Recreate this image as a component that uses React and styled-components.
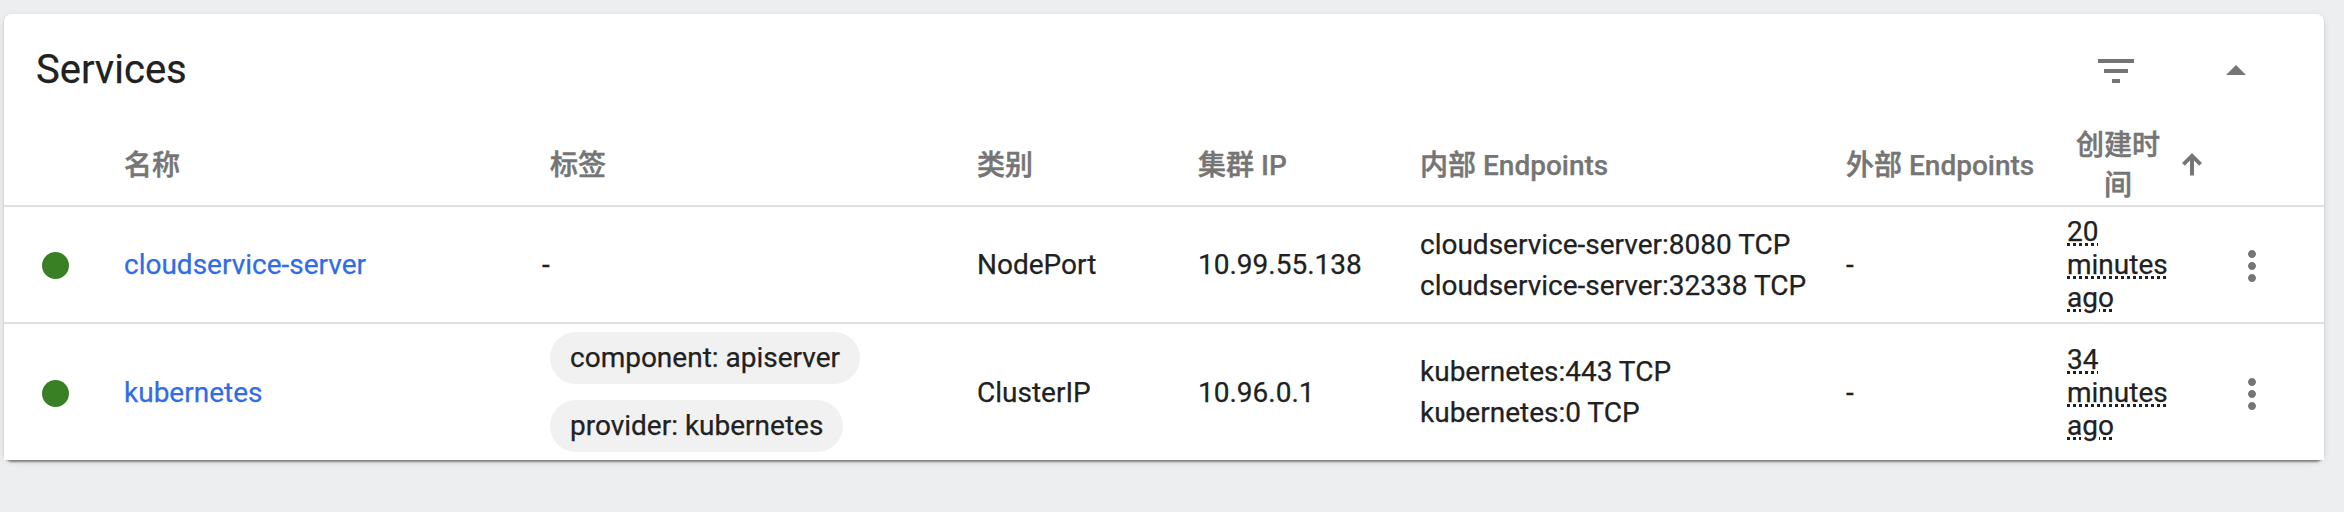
import React from 'react';
import styled, { createGlobalStyle } from 'styled-components';

const GlobalStyle = createGlobalStyle`
  * { box-sizing: border-box; }
  body {
    margin: 0;
    background: #edeef0;
    color: #212121;
    font: 400 28px/33px Roboto, 'Noto Sans CJK SC', sans-serif;
    -webkit-text-stroke: 0.25px currentColor;
  }
`;

const Page = styled.main`
  height: 512px;
  padding: 14px 20px 0 4px;
  overflow: hidden;
`;

const Card = styled.section`
  height: 446px;
  border-radius: 8px;
  background: #fff;
  box-shadow: 0 4px 2px -2px rgba(0, 0, 0, 0.3), 0 2px 2px rgba(0, 0, 0, 0.14),
    0 2px 6px rgba(0, 0, 0, 0.12);
`;

const CardHeader = styled.header`
  display: flex;
  align-items: center;
  height: 111px;
  padding: 3px 64px 0 32px;
`;

const Title = styled.h2`
  flex: 1;
  margin: 0;
  padding-bottom: 2px;
  font-size: 40px;
  line-height: 48px;
  font-weight: 400;
`;

const IconButton = styled.button`
  display: grid;
  place-items: center;
  width: 48px;
  height: 48px;
  margin: ${(p) => p.$drop || 0}px 0 0 ${(p) => p.$gap || 0}px;
  padding: 0;
  border: 0;
  background: none;
  color: #757575;

  svg { display: block; fill: currentColor; }
`;

const Row = styled.div`
  display: grid;
  grid-template-columns: 120px 426px 427px 221px 222px 426px 222px 138px 1fr;
  align-items: center;
  height: ${(p) => p.$height}px;
  background: #fff;
  border-bottom: ${(p) => (p.$last ? 0 : '2px solid #e0e0e0')};
`;

const HeadCell = styled.div`
  padding-top: 1px;
  color: #757575;
  font-weight: 500;
  line-height: 40px;
  white-space: nowrap;
`;

const Han = styled.span`
  -webkit-text-stroke: 0.5px currentColor;
`;

const SortHead = styled(HeadCell)`
  display: flex;
  align-items: center;
  padding: 1px 0 0 6px;
  text-align: center;
  white-space: normal;

  ${Han} { flex: 0 0 88px; }
  svg { flex: none; margin: 0 0 3px 20px; fill: currentColor; }
`;

const Cell = styled.div`
  white-space: nowrap;
`;

const StatusDot = styled.div`
  width: 27px;
  height: 27px;
  margin: 2px 0 0 38px;
  border-radius: 50%;
  background: #388023;
`;

const NameLink = styled.a`
  color: #326ce5;
  text-decoration: none;
`;

const Labels = styled.div`
  display: flex;
  flex-direction: column;
  align-items: flex-start;
  gap: 16px;
`;

const Chip = styled.span`
  height: 52px;
  padding: 9px 20px 10px;
  border-radius: 26px;
  background: #f1f1f1;
`;

const NoLabels = styled.div`
  margin-left: -8px;
`;

const Endpoint = styled.div`
  line-height: 41px;
`;

const Age = styled.abbr`
  display: block;
  width: 110px;
  margin-left: -1px;
  white-space: normal;
  text-decoration: underline dotted 3px;
`;

const SERVICES = [
  {
    name: 'cloudservice-server',
    labels: [],
    type: 'NodePort',
    ip: '10.99.55.138',
    endpoints: ['cloudservice-server:8080 TCP', 'cloudservice-server:32338 TCP'],
    age: '20 minutes ago',
    height: 117,
  },
  {
    name: 'kubernetes',
    labels: ['component: apiserver', 'provider: kubernetes'],
    type: 'ClusterIP',
    ip: '10.96.0.1',
    endpoints: ['kubernetes:443 TCP', 'kubernetes:0 TCP'],
    age: '34 minutes ago',
    height: 136,
  },
];

const FilterIcon = () => (
  <svg width="48" height="48" viewBox="0 0 24 24">
    <path d="M10 18h4v-2h-4v2zM3 6v2h18V6H3zm3 7h12v-2H6v2z" />
  </svg>
);

const CollapseIcon = () => (
  <svg width="48" height="48" viewBox="0 0 24 24">
    <path d="M7 14l5-5 5 5z" />
  </svg>
);

const MenuIcon = () => (
  <svg width="48" height="48" viewBox="0 0 24 24">
    <path d="M12 8c1.1 0 2-.9 2-2s-.9-2-2-2-2 .9-2 2 .9 2 2 2zm0 2c-1.1 0-2 .9-2 2s.9 2 2 2 2-.9 2-2-.9-2-2-2zm0 6c-1.1 0-2 .9-2 2s.9 2 2 2 2-.9 2-2-.9-2-2-2z" />
  </svg>
);

const SortArrow = () => (
  <svg width="20" height="24" viewBox="0 0 20 24">
    <path d="M10 0l10 10-2.8 2.8-5.2-5.2V22.500H8V7.600L2.800 12.800 0 10z" />
  </svg>
);

export default function App() {
  return (
    <>
      <GlobalStyle />
      <Page>
        <Card>
          <CardHeader>
            <Title>Services</Title>
            <IconButton aria-label="filter"><FilterIcon /></IconButton>
            <IconButton aria-label="collapse" $gap={72}><CollapseIcon /></IconButton>
          </CardHeader>
          <Row $height={82}>
            <div />
            <HeadCell><Han>名称</Han></HeadCell>
            <HeadCell><Han>标签</Han></HeadCell>
            <HeadCell><Han>类别</Han></HeadCell>
            <HeadCell><Han>集群</Han> IP</HeadCell>
            <HeadCell><Han>内部</Han> Endpoints</HeadCell>
            <HeadCell><Han>外部</Han> Endpoints</HeadCell>
            <SortHead><Han>创建时间</Han><SortArrow /></SortHead>
          </Row>
          {SERVICES.map((s, i) => (
            <Row key={s.name} $height={s.height} $last={i === SERVICES.length - 1}>
              <StatusDot />
              <Cell><NameLink>{s.name}</NameLink></Cell>
              {s.labels.length ? (
                <Labels>{s.labels.map((l) => <Chip key={l}>{l}</Chip>)}</Labels>
              ) : (
                <NoLabels>-</NoLabels>
              )}
              <Cell>{s.type}</Cell>
              <Cell>{s.ip}</Cell>
              <Cell>{s.endpoints.map((e) => <Endpoint key={e}>{e}</Endpoint>)}</Cell>
              <Cell>-</Cell>
              <Age>{s.age}</Age>
              <IconButton aria-label="menu" $gap={22} $drop={3}><MenuIcon /></IconButton>
            </Row>
          ))}
        </Card>
      </Page>
    </>
  );
}
